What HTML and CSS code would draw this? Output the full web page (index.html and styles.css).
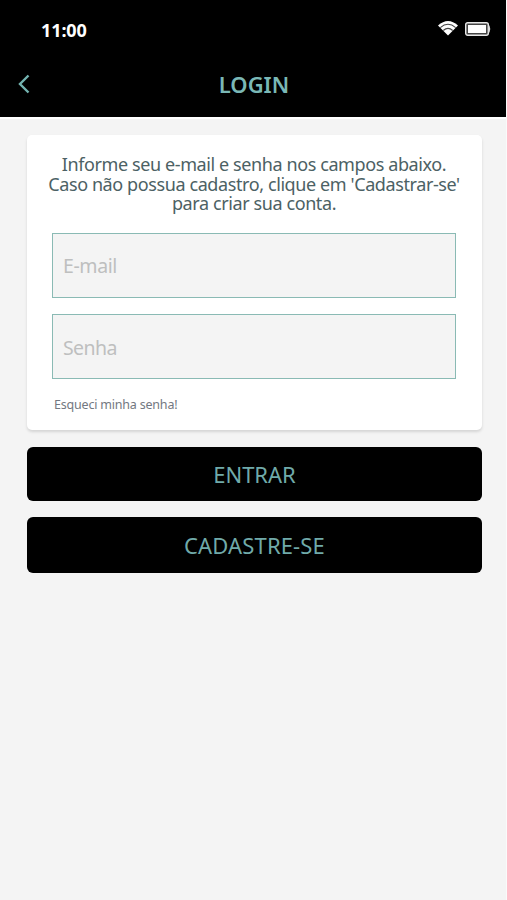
FILE: index.html
```html
<!DOCTYPE html>
<html lang="pt-BR">
<head>
<meta charset="utf-8">
<title>Login</title>
<link rel="stylesheet" href="styles.css">
</head>
<body>
<div class="screen">
  <header class="top">
    <div class="status">
      <span class="time">11:00</span>
      <span class="icons">
        <svg class="wifi" viewBox="0 0 22 16" width="22" height="16">
          <path class="wifi-fill" d="M1 5.500Q11-3.500 21 5.500L11 15.500Z"/>
          <path class="wifi-gap" d="M3.300 7.600Q11 1 18.700 7.600M6.300 10.500Q11 6.300 15.700 10.500"/>
        </svg>
        <svg class="battery" viewBox="0 0 26 14" width="26" height="14">
          <rect class="shell" x="0.7" y="0.7" width="22.6" height="12.6" rx="2"/>
          <rect class="charge" x="3" y="3" width="18" height="8"/>
          <path class="tip" d="M23 3.500h1.500q1.500 3.500 0 7H23z"/>
        </svg>
      </span>
    </div>
    <nav class="bar">
      <svg class="back" viewBox="0 0 12 20" width="12" height="20"><path d="M10.500 1.500L2 10l8.500 8.500"/></svg>
      <h1>LOGIN</h1>
    </nav>
  </header>
  <main>
    <section class="card">
      <p class="intro">
        Informe seu e-mail e senha nos campos abaixo.<br>
        Caso não possua cadastro, clique em 'Cadastrar-se'<br>
        para criar sua conta.
      </p>
      <div class="field"><span>E-mail</span></div>
      <div class="field"><span class="senha">Senha</span></div>
      <a class="forgot">Esqueci minha senha!</a>
    </section>
    <div class="btn enter"><span>ENTRAR</span></div>
    <div class="btn register"><span>CADASTRE-SE</span></div>
  </main>
</div>
</body>
</html>
```
FILE: styles.css
```css
* { box-sizing: border-box; }
body { margin: 0; background: #f4f4f4; font-family: "Noto Sans", "Open Sans", sans-serif; }
.screen { height: 900px; overflow: hidden; border-right: 1px solid #fafafa; }
.top { height: 119px; background: #000; border-bottom: 2px solid #fff; }
.status { height: 60px; padding: 19px 15px 0 41px; display: flex; justify-content: space-between; align-items: flex-start; }
.time { color: #fff; font-size: 18px; font-weight: 700; line-height: 22px; letter-spacing: -0.1px; }
.icons { display: flex; gap: 6px; padding-top: 1px; }
.battery { margin-top: 2px; }
.wifi-fill, .charge { fill: #fff; }
.wifi-gap { fill: none; stroke: #444; stroke-width: 1.1; }
.shell { fill: #444; stroke: #e8e8e8; stroke-width: 1.4; }
.tip { fill: #ddd; }
.bar { height: 48px; display: grid; grid-template-columns: 60px 1fr 60px; align-items: center; }
.back { margin-left: 18px; fill: none; stroke: #73b3b0; stroke-width: 2.4; }
h1 { margin: -1px 0 0 2px; color: #7ab8b6; font-size: 22px; font-weight: 600; line-height: 30px; text-align: center; }
main { padding: 16px 24px 0 27px; }
.card { height: 295px; padding: 20px 26px 0 25px; background: #fff; border-radius: 5px; box-shadow: 0 2px 3px rgba(0,0,0,.13); }
.intro { margin: 0 -10px 19px; color: #4c6164; font-size: 18px; line-height: 19.6px; letter-spacing: -0.4px; text-align: center; }
.field { height: 65px; margin-bottom: 16.500px; padding-left: 10px; display: flex; align-items: center; background: #f4f4f4; border: 1.500px solid #8abab4; color: #bebfbf; font-size: 19.500px; letter-spacing: -0.4px; }
.senha { margin-top: 2px; letter-spacing: -0.6px; }
.forgot { display: block; margin: 1px 0 0 2px; color: #737881; font-size: 12.500px; line-height: 18px; letter-spacing: -0.2px; }
.btn { border-radius: 6px; background: #000; color: #70aaaa; font-size: 22px; display: flex; align-items: center; justify-content: center; }
.enter { height: 54px; margin-top: 17px; }
.register { height: 56px; margin-top: 16px; letter-spacing: 0.15px; }
```
